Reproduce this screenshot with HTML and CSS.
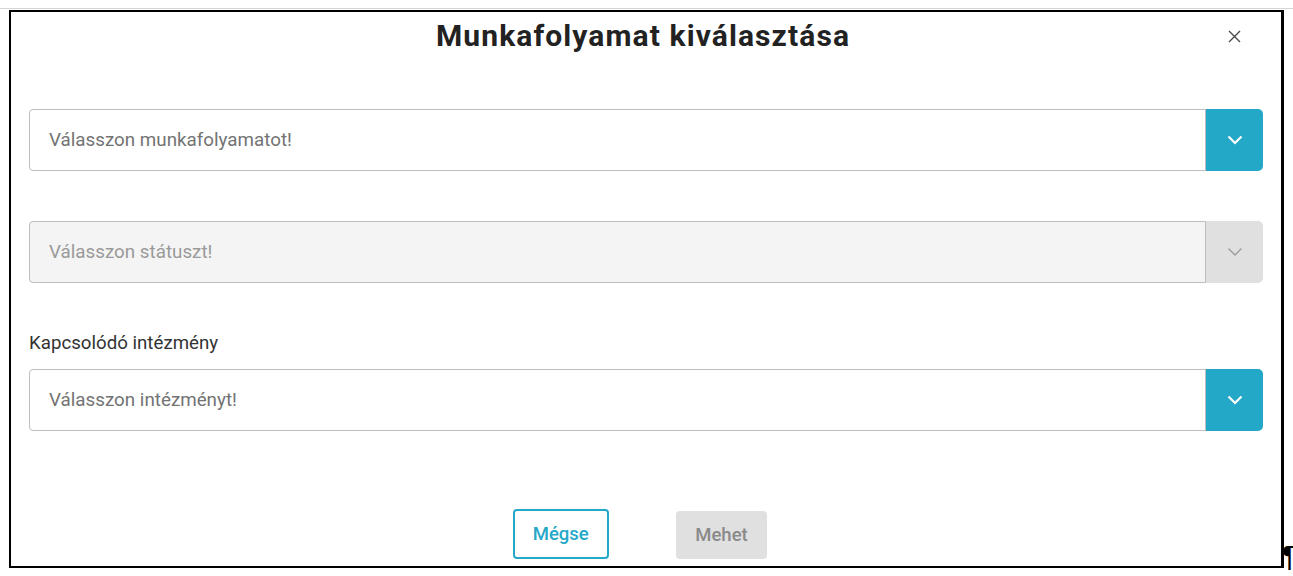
FILE: index.html
```html
<!DOCTYPE html>
<html lang="hu">
<head>
    <meta charset="UTF-8">
    <meta name="viewport" content="width=device-width, initial-scale=1.0">
    <title>Munkafolyamat kiválasztása</title>
    <link rel="stylesheet" href="styles.css">
</head>
<body>

<div class="sheet-line"></div>

<div class="dialog">
    <!-- Header -->
    <div class="dialog-header">
        <span></span>
        <div class="dialog-title">Munkafolyamat kiválasztása</div>
        <button class="close-btn" type="button" aria-label="Bezárás">
            <svg width="13" height="13" viewBox="0 0 13 13">
                <path d="M1 1 L12 12 M12 1 L1 12" stroke="#4a4a4a" stroke-width="1.4" fill="none"/>
            </svg>
        </button>
    </div>

    <!-- Workflow select -->
    <div class="select select-first">
        <div class="select-box">Válasszon munkafolyamatot!</div>
        <div class="select-btn">
            <svg width="16" height="10" viewBox="0 0 16 10">
                <path d="M1.5 1.5 L8 8 L14.5 1.5" stroke="#ffffff" stroke-width="2.2" fill="none"/>
            </svg>
        </div>
    </div>

    <!-- Status select (disabled) -->
    <div class="select select-disabled">
        <div class="select-box">Válasszon státuszt!</div>
        <div class="select-btn">
            <svg width="16" height="10" viewBox="0 0 16 10">
                <path d="M1.5 1.5 L8 8 L14.5 1.5" stroke="#9a9a9a" stroke-width="1.3" fill="none"/>
            </svg>
        </div>
    </div>

    <!-- Institution select -->
    <label class="field-label">Kapcsolódó intézmény</label>
    <div class="select">
        <div class="select-box">Válasszon intézményt!</div>
        <div class="select-btn">
            <svg width="16" height="10" viewBox="0 0 16 10">
                <path d="M1.5 1.5 L8 8 L14.5 1.5" stroke="#ffffff" stroke-width="2.2" fill="none"/>
            </svg>
        </div>
    </div>

    <!-- Actions -->
    <div class="dialog-actions">
        <button class="btn btn-outline" type="button">Mégse</button>
        <button class="btn btn-disabled" type="button" disabled>Mehet</button>
    </div>
</div>

<span class="pilcrow">¶</span>

</body>
</html>
```

FILE: styles.css
```css
/* Colors */
:root {
    --teal: #24a8c8;
    --text-dark: #222222;
    --text-label: #333333;
    --placeholder: #737373;
    --border: #bdbdbd;
    --disabled-bg: #f4f4f4;
    --disabled-btn: #e0e0e0;
    --disabled-text: #9a9a9a;
}

body {
    margin: 0;
    padding-top: 8px;
    background-color: #ffffff;
    font-family: Roboto, "Liberation Sans", sans-serif;
    position: relative;
    width: 1293px;
    height: 568px;
    overflow: hidden;
}

.sheet-line {
    height: 1px;
    background-color: #d6d6d6;
}

.dialog {
    box-sizing: border-box;
    width: 1275px;
    height: 558px;
    margin: 1px 0 0 9px;
    border: 2px solid #000000;
    border-right-width: 3px;
    padding: 0 18px;
    overflow: hidden;
}

.dialog-header {
    display: grid;
    grid-template-columns: 1fr auto 1fr;
    align-items: center;
    padding-top: 3px;
}

.dialog-title {
    margin-right: 6px;
    font-size: 30px;
    line-height: 41px;
    letter-spacing: 1.1px;
    font-weight: bold;
    color: var(--text-dark);
}

.close-btn {
    justify-self: end;
    margin-right: 22px;
    margin-top: 2px;
    padding: 0;
    border: none;
    background: none;
    display: flex;
}

/* Select fields */
.select {
    display: flex;
    height: 62px;
}

.select-first {
    margin-top: 53px;
}

.select-disabled {
    margin-top: 50px;
}

.select-box {
    flex: 1;
    display: flex;
    align-items: center;
    padding-left: 19px;
    border: 1px solid var(--border);
    border-radius: 4px 0 0 4px;
    font-size: 18.8px;
    color: var(--placeholder);
}

.select-btn {
    width: 57px;
    display: flex;
    align-items: center;
    justify-content: center;
    background-color: var(--teal);
    border-radius: 0 5px 5px 0;
}

.select-disabled .select-box {
    background-color: var(--disabled-bg);
    color: var(--disabled-text);
}

.select-disabled .select-btn {
    background-color: var(--disabled-btn);
}

.field-label {
    display: block;
    margin: 49px 0 15px;
    font-size: 18.7px;
    line-height: 22px;
    color: var(--text-label);
}

/* Buttons */
.dialog-actions {
    display: flex;
    justify-content: center;
    align-items: flex-end;
    gap: 67px;
    margin-top: 78px;
    padding-right: 12px;
}

.btn {
    font-family: Roboto, "Liberation Sans", sans-serif;
    font-size: 18.5px;
    font-weight: 500;
    border-radius: 4px;
    cursor: pointer;
}

.btn-outline {
    height: 50px;
    padding: 0 18px;
    background-color: #ffffff;
    border: 2px solid var(--teal);
    color: var(--teal);
}

.btn-disabled {
    height: 48px;
    padding: 0 19.5px;
    background-color: var(--disabled-btn);
    border: none;
    color: #8a8a8a;
}

.pilcrow {
    position: absolute;
    left: 1282px;
    top: 539px;
    font-family: "Liberation Sans", sans-serif;
    font-weight: bold;
    font-size: 30px;
    line-height: 34px;
    color: #000000;
}
```
